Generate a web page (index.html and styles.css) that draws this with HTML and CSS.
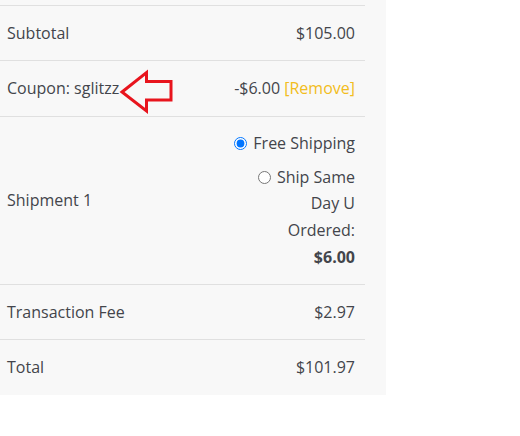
FILE: index.html
```html
<!DOCTYPE html>
<html>
<head>
<meta charset="utf-8">
<link rel="stylesheet" href="styles.css">
</head>
<body>
<div class="panel">
  <div class="totals">
    <div class="row">
      <div class="label">Subtotal</div>
      <div class="value">$105.00</div>
    </div>
    <div class="row coupon">
      <div class="label">Coupon: sglitzz</div>
      <div class="value">-$6.00 <a class="remove" href="#">[Remove]</a></div>
      <svg class="arrow" width="60" height="52" viewBox="0 0 60 52">
        <polygon points="6,26 30.5,6.5 30.5,15.5 55,15.5 55,34 30.5,34 30.5,45" fill="none" stroke="#e8141d" stroke-width="3" stroke-linejoin="miter"/>
      </svg>
    </div>
    <div class="row">
      <div class="label">Shipment 1</div>
      <div class="value">
        <ul class="methods">
          <li class="method"><input type="radio" name="ship" checked><label>Free Shipping</label></li>
          <li class="method method-narrow"><input type="radio" name="ship"><label>Ship Same Day U Ordered: <span class="amount">$6.00</span></label></li>
        </ul>
      </div>
    </div>
    <div class="row">
      <div class="label">Transaction Fee</div>
      <div class="value">$2.97</div>
    </div>
    <div class="row">
      <div class="label">Total</div>
      <div class="value">$101.97</div>
    </div>
  </div>
</div>
</body>
</html>
```
FILE: styles.css
```css
html, body {
  margin: 0;
  padding: 0;
  background: #ffffff;
}
body {
  font-family: "Open Sans", "Liberation Sans", sans-serif;
  font-size: 16px;
  line-height: 26.667px;
  color: #43454b;
}
.panel {
  width: 365px;
  padding: 5px 21px 0 0;
  background: #f8f8f8;
}
.row {
  position: relative;
  display: grid;
  grid-template-columns: 1fr auto;
  align-items: center;
  border-top: 1px solid #e0e0e0;
  padding: 13.8px 10px 13.8px 7px;
}
.value {
  text-align: right;
}
.remove {
  color: #f2bd20;
  text-decoration: none;
}
.methods {
  list-style: none;
  margin: 0;
  padding: 0;
  display: flex;
  flex-direction: column;
  align-items: flex-end;
  gap: 6.5px;
}
.method {
  text-align: right;
  white-space: nowrap;
}
.method-narrow {
  white-space: normal;
  width: 104px;
}
.methods input {
  margin: 0 6px 0 0;
  width: 13px;
  height: 13px;
  vertical-align: -1px;
}
.amount {
  display: block;
  font-weight: 700;
}
.arrow {
  position: absolute;
  left: 116px;
  top: 5px;
}
```
